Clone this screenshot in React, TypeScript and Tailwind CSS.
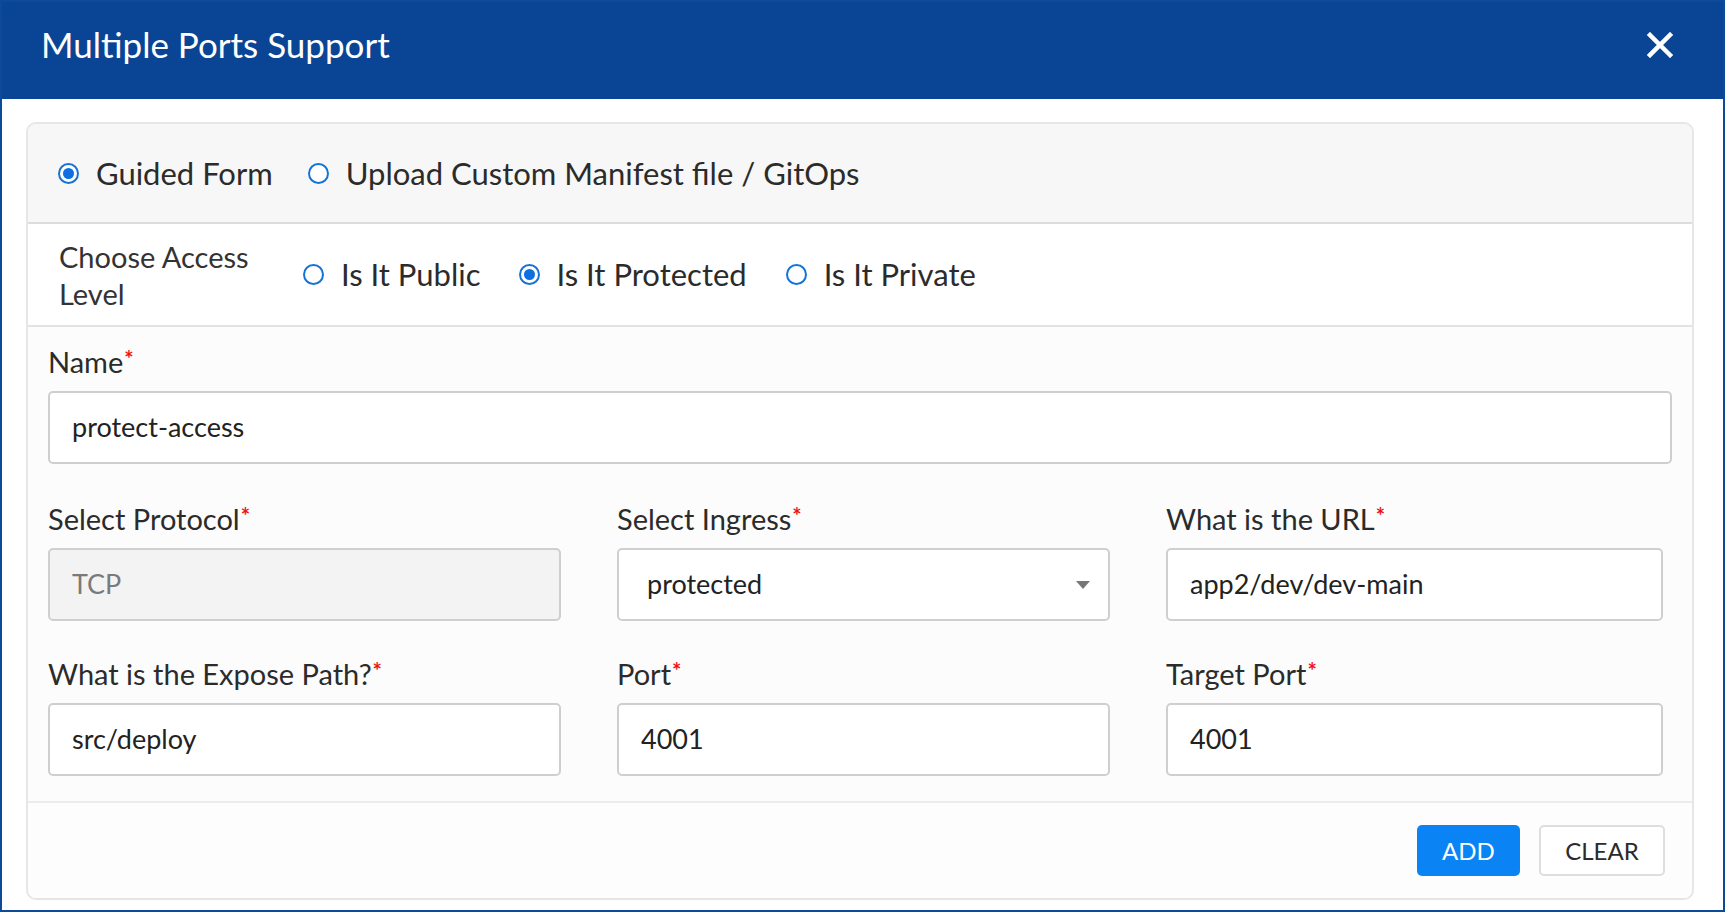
import React from "react";

const font = { fontFamily: "Lato, 'Open Sans', sans-serif" };

function Radio({ checked }: { checked?: boolean }) {
  return (
    <span className="w-[21px] h-[21px] rounded-full border-2 border-[#1473d8] flex items-center justify-center bg-white shrink-0">
      {checked && <span className="w-[11px] h-[11px] rounded-full bg-[#0f6fe0]" />}
    </span>
  );
}

function Label({ children }: { children: React.ReactNode }) {
  return (
    <div className="text-[29px] leading-[30px] text-[#2b2b2b] mb-[14px] h-[30px] whitespace-nowrap">
      {children}
      <span className="text-[#ee1111] text-[22px] font-bold align-top relative top-[-3px] ml-[1px]">*</span>
    </div>
  );
}

function Input({ value, disabled, select }: { value: string; disabled?: boolean; select?: boolean }) {
  return (
    <div
      className={
        "h-[73px] rounded-[5px] border-2 border-[#cfcfcf] flex items-center justify-between pl-[22px] pr-[18px] text-[27px] " +
        (disabled ? "bg-[#f3f3f3] text-[#7a7a7a]" : "bg-white text-[#222222]")
      }
    >
      <span className={select ? "pl-[6px]" : ""}>{value}</span>
      {select && (
        <svg width="14" height="8" viewBox="0 0 14 8">
          <path d="M0 0 L14 0 L7 8 Z" fill="#777777" />
        </svg>
      )}
    </div>
  );
}

export default function App() {
  return (
    <div style={font} className="w-[1725px] h-[912px] border-2 border-[#0c4a9c] bg-white flex flex-col overflow-hidden">
      <div className="h-[97px] bg-[#0a4595] flex items-center justify-between pl-[39px] pr-[50px] pb-[12px] shrink-0">
        <span className="text-white text-[35px]">Multiple Ports Support</span>
        <svg width="26" height="26" viewBox="0 0 26 26">
          <path d="M3 3 L23 23 M23 3 L3 23" stroke="white" strokeWidth="4.5" strokeLinecap="square" />
        </svg>
      </div>
      <div className="flex-1 pt-[23px] pl-[24px] pr-[29px] pb-[10px]">
        <div className="h-full border-2 border-[#e6e6e6] rounded-[10px] overflow-hidden flex flex-col bg-[#fcfcfc]">
          <div className="h-[100px] bg-[#f7f7f7] border-b-2 border-[#dddddd] flex items-center pl-[30px] text-[31px] text-[#2b2b2b] shrink-0">
            <div className="flex items-center gap-[17px]">
              <Radio checked />
              <span>Guided Form</span>
            </div>
            <div className="flex items-center gap-[17px] ml-[35px]">
              <Radio />
              <span>Upload Custom Manifest file / GitOps</span>
            </div>
          </div>
          <div className="h-[103px] border-b-2 border-[#e3e3e3] flex items-center pl-[31px] shrink-0 bg-white">
            <div className="w-[244px] text-[29px] leading-[37px] text-[#333333]">Choose Access<br />Level</div>
            <div className="flex items-center text-[31px] text-[#2b2b2b]">
              <div className="flex items-center gap-[17px]">
                <Radio />
                <span>Is It Public</span>
              </div>
              <div className="flex items-center gap-[17px] ml-[38px]">
                <Radio checked />
                <span>Is It Protected</span>
              </div>
              <div className="flex items-center gap-[17px] ml-[39px]">
                <Radio />
                <span>Is It Private</span>
              </div>
            </div>
          </div>
          <div className="pl-[20px] pr-[20px] pt-[20px] h-[476px] border-b-2 border-[#ececec] shrink-0">
            <Label>Name</Label>
            <Input value="protect-access" />
            <div className="grid grid-cols-[513px_493px_497px] gap-x-[56px] mt-[40px]">
              <div>
                <Label>Select Protocol</Label>
                <Input value="TCP" disabled />
              </div>
              <div>
                <Label>Select Ingress</Label>
                <Input value="protected" select />
              </div>
              <div>
                <Label>What is the URL</Label>
                <Input value="app2/dev/dev-main" />
              </div>
              <div className="mt-[38px]">
                <Label>What is the Expose Path?</Label>
                <Input value="src/deploy" />
              </div>
              <div className="mt-[38px]">
                <Label>Port</Label>
                <Input value="4001" />
              </div>
              <div className="mt-[38px]">
                <Label>Target Port</Label>
                <Input value="4001" />
              </div>
            </div>
          </div>
          <div className="flex-1 flex items-center justify-end pr-[27px] gap-[19px] bg-[#fdfdfd]">
            <button className="w-[103px] h-[51px] rounded-[5px] bg-[#0a84f5] text-white text-[24px]">ADD</button>
            <button className="w-[126px] h-[51px] rounded-[5px] border-2 border-[#dedede] bg-white text-[#2b2b2b] text-[24px]">CLEAR</button>
          </div>
        </div>
      </div>
    </div>
  );
}
